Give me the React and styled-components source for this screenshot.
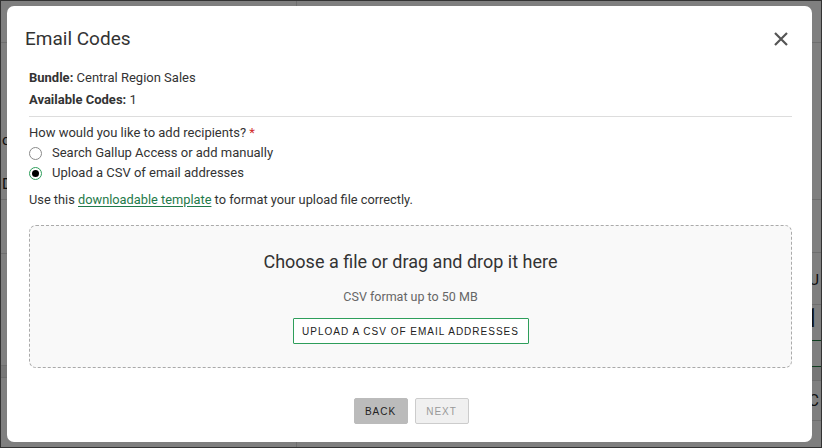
import styled, { createGlobalStyle } from "styled-components";

const GlobalStyle = createGlobalStyle`
  html, body {
    margin: 0;
    padding: 0;
    width: 822px;
    height: 448px;
    overflow: hidden;
    font-family: Roboto, "Liberation Sans", sans-serif;
  }
`;

// page behind the dialog
const Page = styled.div`
  display: flex;
  width: 822px;
  height: 448px;
  background: #fff;
  color: #222;
`;

const Column = styled.div`
  display: flex;
  flex-direction: column;
  width: ${(props) => props.$width || "auto"};
  flex: ${(props) => (props.$grow ? 1 : "none")};
  border-right: 1px solid #ddd;
`;

const PageRow = styled.div`
  box-sizing: border-box;
  height: ${(props) => props.$h}px;
  border-bottom: 1px solid ${(props) => (props.$green ? "#1f7a3e" : "#ddd")};
  background: ${(props) => (props.$shade ? "#eee" : "transparent")};
  display: flex;
  flex-direction: column;
  justify-content: ${(props) => (props.$pt ? "flex-start" : "center")};
  align-items: ${(props) => (props.$end ? "flex-end" : "flex-start")};
  gap: 26px;
  font-size: ${(props) => props.$fs || 14}px;
  line-height: 18px;
  padding: ${(props) => props.$pt || 0}px 2px 0;
  overflow: hidden;
`;

// dim layer + dialog
const Overlay = styled.div`
  position: fixed;
  inset: 0;
  background: rgba(0, 0, 0, 0.5);
  border: 1px solid #333;
  padding: 5px 9px 5px 6px;
  display: flex;
`;

const Modal = styled.div`
  flex: 1;
  background: #fff;
  border-radius: 7px;
  padding: 20px 20px 18px 22px;
  display: flex;
  flex-direction: column;
  color: #333;
`;

const Header = styled.div`
  display: flex;
  justify-content: space-between;
  align-items: center;
  margin-bottom: 15px;
`;

const Title = styled.h2`
  margin: 0 0 0 -4px;
  font-size: 19px;
  font-weight: 400;
  color: #333;
  line-height: 26px;
`;

const CloseButton = styled.button`
  border: 0;
  background: none;
  padding: 0;
  margin-right: 3px;
  width: 16px;
  height: 16px;
  display: flex;
  cursor: pointer;
`;

const Body = styled.div`
  display: flex;
  flex-direction: column;
  flex: 1;
`;

const Meta = styled.div`
  font-size: 13px;
  line-height: 22px;
  color: #333;

  b {
    font-weight: 700;
  }
`;

const Divider = styled.hr`
  border: 0;
  border-top: 1px solid #ddd;
  margin: 5px 0 6px;
`;

const Question = styled.div`
  font-size: 13px;
  line-height: 20px;

  span {
    color: #d12a2a;
  }
`;

const RadioRow = styled.label`
  display: flex;
  align-items: center;
  gap: 10px;
  font-size: 13px;
  line-height: 20px;
  color: #333;
`;

const RadioDot = styled.span`
  box-sizing: border-box;
  width: 13px;
  height: 13px;
  border-radius: 50%;
  border: 1px solid ${(props) => (props.$checked ? "#2e9e5b" : "#8a8a8a")};
  display: flex;
  align-items: center;
  justify-content: center;

  &::after {
    content: "";
    width: 7px;
    height: 7px;
    border-radius: 50%;
    background: ${(props) => (props.$checked ? "#000" : "transparent")};
  }
`;

const Hint = styled.p`
  margin: 7px 0 15px;
  font-size: 12.8px;
  line-height: 20px;

  a {
    color: #1f7a4a;
    text-decoration: underline;
    text-underline-offset: 2px;
  }
`;

const DropZone = styled.div`
  border: 1px dashed #aaa;
  border-radius: 7px;
  background: #f9f9f9;
  height: 143px;
  box-sizing: border-box;
  display: flex;
  flex-direction: column;
  align-items: center;
  padding-top: 23px;
`;

const DropTitle = styled.div`
  font-size: 18px;
  line-height: 26px;
  color: #333;
`;

const DropNote = styled.div`
  font-size: 12.5px;
  line-height: 18px;
  color: #666;
  margin-top: 13px;
`;

const Button = styled.button`
  font-family: "Liberation Sans", Arial, sans-serif;
  font-size: 10px;
  letter-spacing: 1px;
  text-transform: uppercase;
  white-space: nowrap;
  height: 26px;
  padding: 0;
  border-radius: 2px;
  cursor: pointer;
  border: 1px solid
    ${(props) =>
      props.$variant === "outline"
        ? "#2e9e5b"
        : props.$variant === "disabled"
        ? "#ccc"
        : "#bbb"};
  background: ${(props) =>
    props.$variant === "outline"
      ? "#fff"
      : props.$variant === "disabled"
      ? "#f0f0f0"
      : "#bbb"};
  color: ${(props) => (props.$variant === "disabled" ? "#999" : "#222")};
`;

const UploadButton = styled(Button)`
  margin-top: 12px;
  width: 236px;
  height: 26px;
  border-radius: 1px;
`;

const Footer = styled.div`
  display: flex;
  justify-content: center;
  gap: 7px;
  margin-top: auto;
  padding-left: 1px;
`;

const FooterButton = styled(Button)`
  width: 54px;
`;

function CloseIcon() {
  return (
    <svg width="16" height="16" viewBox="0 0 16 16">
      <path d="M2 2 L14 14 M14 2 L2 14" stroke="#555" strokeWidth="2.2" />
    </svg>
  );
}

export default function App() {
  return (
    <>
      <GlobalStyle />
      <Page>
        <Column $width="296px">
          <PageRow $h={43} />
          <PageRow $h={157} $fs={15} $pt={88}>
            <span>or</span>
            <span>Do</span>
          </PageRow>
          <PageRow $h={54} />
          <PageRow $h={112} />
          <PageRow $h={12} $shade />
        </Column>
        <Column $grow>
          <PageRow $h={43} />
          <PageRow $h={157} />
          <PageRow $h={53} />
          <PageRow $h={52} $end $fs={15} $pt={18}>
            U
          </PageRow>
          <PageRow $h={36} $end $green $fs={26} $pt={4}>
            1
          </PageRow>
          <PageRow $h={26} $green />
          <PageRow $h={14} $shade />
          <PageRow $h={40} $end $fs={16}>
            C
          </PageRow>
        </Column>
      </Page>
      <Overlay>
        <Modal role="dialog" aria-label="Email Codes">
          <Header>
            <Title>Email Codes</Title>
            <CloseButton aria-label="Close">
              <CloseIcon />
            </CloseButton>
          </Header>
          <Body>
            <Meta>
              <b>Bundle:</b> Central Region Sales
            </Meta>
            <Meta>
              <b>Available Codes:</b> 1
            </Meta>
            <Divider />
            <Question>
              How would you like to add recipients? <span>*</span>
            </Question>
            <RadioRow>
              <RadioDot />
              Search Gallup Access or add manually
            </RadioRow>
            <RadioRow>
              <RadioDot $checked />
              Upload a CSV of email addresses
            </RadioRow>
            <Hint>
              Use this <a href="#template">downloadable template</a> to format your upload file
              correctly.
            </Hint>
            <DropZone>
              <DropTitle>Choose a file or drag and drop it here</DropTitle>
              <DropNote>CSV format up to 50 MB</DropNote>
              <UploadButton $variant="outline">Upload a CSV of email addresses</UploadButton>
            </DropZone>
            <Footer>
              <FooterButton>Back</FooterButton>
              <FooterButton $variant="disabled">Next</FooterButton>
            </Footer>
          </Body>
        </Modal>
      </Overlay>
    </>
  );
}
